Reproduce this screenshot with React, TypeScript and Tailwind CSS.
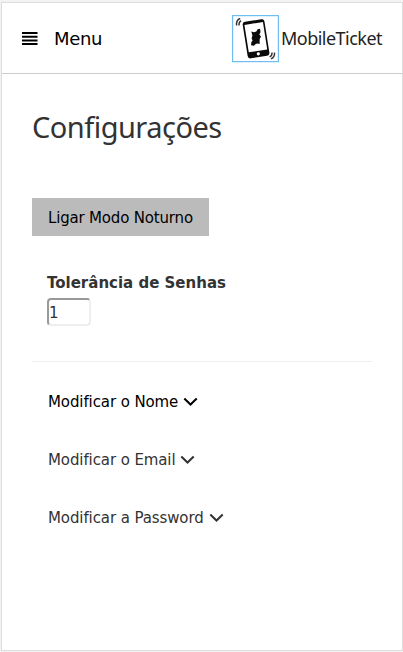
function Logo() {
  return (
    <svg width="48" height="48" viewBox="0 0 48 48" className="block shrink-0">
      <rect x="0.6" y="0.6" width="45.800" height="46" fill="#fff" stroke="#6fbdf2" strokeWidth="1.2" />
      <g transform="rotate(-9 24 23.500)">
        <rect x="13" y="5.300" width="22" height="37" rx="2.800" fill="#0a0a0a" />
        <rect x="14.700" y="8.300" width="18.700" height="27.700" fill="#fff" />
        <circle cx="23.900" cy="39" r="1.600" fill="#fff" />
      </g>
      <path d="M19.300 16.600l2.700.6 2.300-.8 1.300-2.200 2.500-.4.400 3.400-1.200 2.200 1.700 2.200-1.300 2.300-.1 5.200-2.500-.6-1.700.8-1.400 1.400-3-.4.400-3.400 1.200-1.400-1-2 .8-3z" fill="#0a0a0a" />
      <g fill="none" stroke="#333" strokeWidth="1.400">
        <path d="M4.600 10.500C4.200 7 5.200 4.500 8.200 3.500" />
        <path d="M7 10.500C6.800 8.300 7.400 6.700 9 5.700" />
        <path d="M42.500 37.500C42.800 40.500 41.500 42.800 39 43.800" />
        <path d="M40 37.500C40.200 39.500 39.400 41 37.600 41.800" />
      </g>
    </svg>
  );
}

function Chevron() {
  return (
    <svg width="15" height="10" viewBox="0 0 15 10" className="block shrink-0">
      <path d="M1.300 1.500L7.500 7.500L13.700 1.500" fill="none" stroke="currentColor" strokeWidth="2" />
    </svg>
  );
}

export default function App() {
  return (
    <div className="h-[652px] w-[403px] overflow-hidden bg-[#f3f3f3] pt-0.5 pl-px font-['DejaVu_Sans',sans-serif] text-[15px] text-[#333]">
      <div className="h-[649px] w-[402px] border border-[#ddd] bg-white">
        <header className="flex h-[71px] items-start border-b border-[#ccc] pl-5 text-black">
          <button className="flex items-center pt-[22px]">
            <svg width="16" height="13" viewBox="0 0 16 13" className="mr-4 block">
              <path d="M0 1h15.500M0 4.700h15.500M0 8.400h15.500M0 12h15.500" stroke="#000" strokeWidth="2" />
            </svg>
            <span className="text-[18px] leading-[27px] tracking-[-0.35px]">Menu</span>
          </button>
          <div className="ml-auto flex w-[170px] pt-3">
            <Logo />
            <span className="ml-px font-['Noto_Sans',sans-serif] text-[18px] leading-[47px] tracking-[-0.52px] text-[#222]">MobileTicket</span>
          </div>
        </header>
        <main className="px-[30px]">
          <h1 className="mt-[30px] font-['Noto_Sans',sans-serif] text-[29px] leading-[46px] tracking-[-0.52px]">Configurações</h1>
          <button className="mt-12 block h-[38px] w-[177px] bg-[#bbb] pt-0.5 pl-4 text-left leading-[36px] tracking-[-0.18px] whitespace-nowrap text-black">
            Ligar Modo Noturno
          </button>
          <div className="mt-9 pl-[15px]">
            <label htmlFor="tolerance" className="block h-[23px] leading-[23px] font-bold whitespace-nowrap">Tolerância de Senhas</label>
            <input
              id="tolerance"
              defaultValue="1"
              className="mt-[3px] block h-7 w-11 rounded border-2 border-t-[#999] border-r-[#eee] border-b-[#eee] border-l-[#999] pt-px text-[#333]"
            />
          </div>
          <hr className="mt-[35px] border-[#eee]" />
          <nav className="mt-[21px] pl-4 tracking-[-0.1px] whitespace-nowrap">
            <button className="flex h-[38px] items-center gap-[5px] text-black">Modificar o Nome <Chevron /></button>
            <button className="mt-5 flex h-[38px] items-center gap-1">Modificar o Email <Chevron /></button>
            <button className="mt-5 flex h-[38px] items-center gap-[5px]">Modificar a Password <Chevron /></button>
          </nav>
        </main>
      </div>
    </div>
  );
}
